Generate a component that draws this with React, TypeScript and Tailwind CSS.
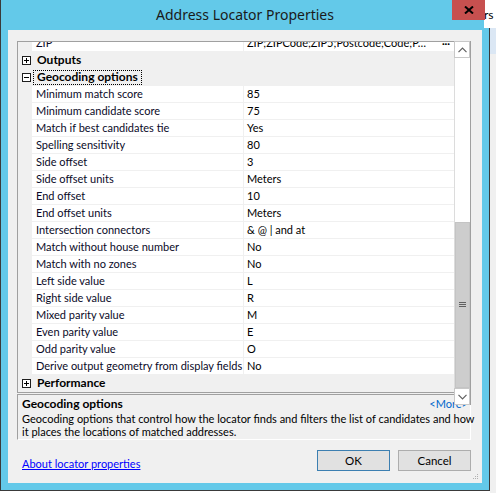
import React from "react";

type Prop = { name: string; value: string; combo?: boolean };

const props: Prop[] = [
  { name: "Minimum match score", value: "85" },
  { name: "Minimum candidate score", value: "75" },
  { name: "Match if best candidates tie", value: "Yes", combo: true },
  { name: "Spelling sensitivity", value: "80" },
  { name: "Side offset", value: "3" },
  { name: "Side offset units", value: "Meters", combo: true },
  { name: "End offset", value: "10" },
  { name: "End offset units", value: "Meters", combo: true },
  { name: "Intersection connectors", value: "& @ | and at" },
  { name: "Match without house number", value: "No", combo: true },
  { name: "Match with no zones", value: "No", combo: true },
  { name: "Left side value", value: "L" },
  { name: "Right side value", value: "R" },
  { name: "Mixed parity value", value: "M" },
  { name: "Even parity value", value: "E" },
  { name: "Odd parity value", value: "O" },
  { name: "Derive output geometry from display fields", value: "No", combo: true },
];

function ExpandBox({ open }: { open: boolean }) {
  return (
    <svg width="9" height="9" viewBox="0 0 9 9" className="block">
      <rect x="0.5" y="0.5" width="8" height="8" fill="#fff" stroke="#1e1e1e" />
      <line x1="2" y1="4.5" x2="7" y2="4.5" stroke="#000" />
      {!open && <line x1="4.5" y1="2" x2="4.5" y2="7" stroke="#000" />}
    </svg>
  );
}

function CategoryRow({ label, open, focused }: { label: string; open: boolean; focused?: boolean }) {
  return (
    <div className="h-[17px] flex items-center bg-[#f0f0f0] border-b border-[#f0f0f0]">
      <div className="w-[14px] flex justify-center pl-[2px]">
        <ExpandBox open={open} />
      </div>
      <div
        className={
          "ml-[1px] h-[15px] flex items-center px-[4px] font-bold text-[12px] text-black " +
          (focused ? "outline outline-1 outline-dotted outline-black -outline-offset-1" : "")
        }
      >
        {label}
      </div>
    </div>
  );
}

function ComboArrow() {
  return (
    <div className="absolute right-[1px] top-0 w-[15px] h-[16px] bg-[#f4f4f4] flex items-center justify-center">
      <svg width="7" height="4" viewBox="0 0 7 4">
        <path d="M0 0 L7 0 L3.5 4 Z" fill="#e2e2e2" />
      </svg>
    </div>
  );
}

function PropRow({ p }: { p: Prop }) {
  return (
    <div className="h-[17px] flex">
      <div className="w-[14px] bg-[#f0f0f0]" />
      <div className="w-[212px] bg-white border-b border-[#f0f0f0] border-r pl-[4px] leading-[16px] text-[11px] text-[#0a0a28] whitespace-nowrap overflow-hidden">
        {p.name}
      </div>
      <div className="relative flex-1 bg-white border-b border-[#f0f0f0] pl-[3px] leading-[16px] text-[11px] text-black whitespace-nowrap overflow-hidden">
        {p.value}
        {p.combo && <ComboArrow />}
      </div>
    </div>
  );
}

function ScrollArrow({ down }: { down?: boolean }) {
  return (
    <div className="h-[17px] bg-white border border-[#c8c8c8] flex items-center justify-center">
      <svg width="9" height="6" viewBox="0 0 9 6">
        <path
          d={down ? "M0.5 0.8 L4.5 4.8 L8.5 0.8" : "M0.5 5.2 L4.5 1.2 L8.5 5.2"}
          fill="none"
          stroke="#606060"
          strokeWidth="1.2"
        />
      </svg>
    </div>
  );
}

export default function App() {
  return (
    <div className="w-[496px] h-[493px] bg-white flex items-start overflow-hidden font-['Lato',sans-serif]">
      {/* dialog window */}
      <div className="w-[490px] h-[491px] shrink-0 bg-[#63c9e9] border-l border-r border-b border-[#3a3a3a] flex flex-col">
        <div className="relative h-[30px] flex items-center justify-center">
          <span className="text-[14px] text-[#1a1a1a] -mt-[1px] font-['Noto_Sans',sans-serif]">
            Address Locator Properties
          </span>
          <div className="absolute top-0 right-[4px] w-[33px] h-[20px] bg-[#c7504f] flex items-center justify-center">
            <svg width="10" height="8" viewBox="0 0 10 8">
              <path d="M1 0.5 L9 7.5 M9 0.5 L1 7.5" stroke="#000" strokeWidth="2" />
            </svg>
          </div>
        </div>

        <div className="mx-[7px] h-[453px] bg-[#f0f0f0] pl-[9px] pr-[11px] pt-[11px] flex flex-col">
          <div className="relative">
            {/* property grid */}
            <div className="h-[352px] border border-[#a0a0a0] bg-[#f0f0f0] overflow-hidden">
              <div className="-mt-[7px]">
                <div className="h-[17px] flex">
                  <div className="w-[14px] bg-[#f0f0f0]" />
                  <div className="w-[212px] bg-white border-b border-r border-[#f0f0f0] pl-[4px] leading-[16px] text-[11px] text-[#0a0a28]">
                    ZIP
                  </div>
                  <div className="relative flex-1 bg-white border-b border-[#f0f0f0] pl-[3px] leading-[16px] text-[11px] text-black whitespace-nowrap overflow-hidden">
                    <span className="inline-block w-[186px] overflow-hidden align-top">ZIP;ZIPCode;ZIP5;Postcode;Code;P…</span>
                    <span className="absolute right-[17px] top-0 w-[14px] h-[16px] bg-white flex items-center justify-center font-bold text-[10px] leading-[10px]">
                      ···
                    </span>
                  </div>
                </div>
                <CategoryRow label="Outputs" open={false} />
                <CategoryRow label="Geocoding options" open focused />
                {props.map((p) => (
                  <PropRow key={p.name} p={p} />
                ))}
                <CategoryRow label="Performance" open={false} />
              </div>
            </div>

            {/* description pane */}
            <div className="mt-[1px] h-[46px] border-t border-l border-[#a0a0a0] border-b border-r border-b-white border-r-white pl-[4px] pt-[2px] text-[11px] leading-[13px] text-black">
              <div className="flex justify-between">
                <span className="font-bold text-[12px]">Geocoding options</span>
                <span className="text-[#0066cc] pr-[2px]">&lt;More&gt;</span>
              </div>
              <div className="mt-[2px] leading-[13px] whitespace-nowrap">
                Geocoding options that control how the locator finds and filters the list of candidates and how
              </div>
              <div className="leading-[13px]">it places the locations of matched addresses.</div>
            </div>

            {/* vertical scroll bar */}
            <div className="absolute top-0 right-0 w-[17px] h-[364px] flex flex-col bg-white border-r border-[#a0a0a0]">
              <ScrollArrow />
              <div className="flex-1 relative bg-white border-l border-[#dcdcdc]">
                <div className="absolute left-0 right-0 top-[164px] bottom-0 bg-[#cdcdcd] border border-[#c4c4c4] flex items-center justify-center">
                  <svg width="7" height="6" viewBox="0 0 7 6">
                    <path d="M0 0.5 H7 M0 2.5 H7 M0 4.5 H7" stroke="#606060" />
                  </svg>
                </div>
              </div>
              <ScrollArrow down />
            </div>
          </div>

          {/* footer */}
          <div className="relative flex items-center mt-[10px] h-[21px]">
            <a className="text-[11px] text-[#0000ff] underline ml-[5px] mt-[7px]">About locator properties</a>
            <div className="ml-auto flex gap-[8px]">
              <button className="w-[73px] h-[21px] bg-[#e1e1e1] border border-[#3c7fb1] text-[11.5px] text-black">
                OK
              </button>
              <button className="w-[73px] h-[21px] bg-[#e1e1e1] border border-[#adadad] text-[11.5px] text-black">
                Cancel
              </button>
            </div>
          </div>
          <div className="flex justify-end mt-[2px] -mr-[8px]">
            <svg width="7" height="7" viewBox="0 0 7 7">
              <rect x="5" y="1" width="1" height="1" fill="#b0b0b0" />
              <rect x="3" y="3" width="1" height="1" fill="#b0b0b0" />
              <rect x="5" y="3" width="1" height="1" fill="#b0b0b0" />
              <rect x="1" y="5" width="1" height="1" fill="#b0b0b0" />
              <rect x="3" y="5" width="1" height="1" fill="#b0b0b0" />
              <rect x="5" y="5" width="1" height="1" fill="#b0b0b0" />
            </svg>
          </div>
        </div>
      </div>

      {/* neighbouring window peeking out */}
      <div className="flex-1 h-[493px] flex flex-col">
        <div className="h-[28px] bg-white overflow-hidden text-[12px] leading-[12px] pt-[9px] -ml-[6px] text-black whitespace-nowrap">
          rs
        </div>
        <div className="h-[26px] bg-[#dbe7f4]" />
        <div className="flex-1 bg-[#f0f0f0]" />
      </div>
    </div>
  );
}
